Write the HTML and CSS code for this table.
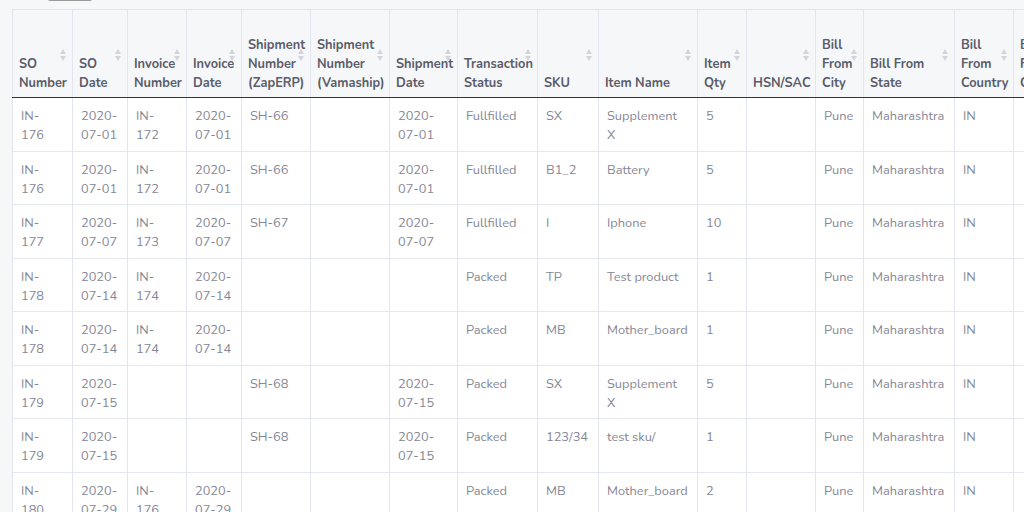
FILE: index.html
```html
<!DOCTYPE html>
<html lang="en">
<head>
<meta charset="utf-8">
<title>Sales Register</title>
<link rel="stylesheet" href="styles.css">
</head>
<body>
<div class="controls">
  <span class="length-select"></span>
</div>
<div class="table-scroll">
<table class="data-table">
  <thead>
    <tr>
      <th class="c-so sorting">SO Number</th>
      <th class="c-sodate sorting">SO Date</th>
      <th class="c-inv sorting">Invoice Number</th>
      <th class="c-invdate sorting">Invoice Date</th>
      <th class="c-shz sorting">Shipment Number (ZapERP)</th>
      <th class="c-shv sorting">Shipment Number (Vamaship)</th>
      <th class="c-shdate sorting">Shipment Date</th>
      <th class="c-status sorting">Transaction Status</th>
      <th class="c-sku sorting">SKU</th>
      <th class="c-item sorting">Item Name</th>
      <th class="c-qty sorting">Item Qty</th>
      <th class="c-hsn sorting">HSN/SAC</th>
      <th class="c-city sorting">Bill From City</th>
      <th class="c-state sorting">Bill From State</th>
      <th class="c-country sorting">Bill From Country</th>
      <th class="c-contact sorting">Bill From Contact</th>
      <th class="c-more sorting">Ship To Address</th>
    </tr>
  </thead>
  <tbody>
    <tr><td>IN-176</td><td>2020-07-01</td><td>IN-172</td><td>2020-07-01</td><td>SH-66</td><td></td><td>2020-07-01</td><td>Fullfilled</td><td>SX</td><td>Supplement X</td><td>5</td><td></td><td>Pune</td><td>Maharashtra</td><td>IN</td><td></td><td></td></tr>
    <tr><td>IN-176</td><td>2020-07-01</td><td>IN-172</td><td>2020-07-01</td><td>SH-66</td><td></td><td>2020-07-01</td><td>Fullfilled</td><td>B1_2</td><td>Battery</td><td>5</td><td></td><td>Pune</td><td>Maharashtra</td><td>IN</td><td></td><td></td></tr>
    <tr><td>IN-177</td><td>2020-07-07</td><td>IN-173</td><td>2020-07-07</td><td>SH-67</td><td></td><td>2020-07-07</td><td>Fullfilled</td><td>I</td><td>Iphone</td><td>10</td><td></td><td>Pune</td><td>Maharashtra</td><td>IN</td><td></td><td></td></tr>
    <tr><td>IN-178</td><td>2020-07-14</td><td>IN-174</td><td>2020-07-14</td><td></td><td></td><td></td><td>Packed</td><td>TP</td><td>Test product</td><td>1</td><td></td><td>Pune</td><td>Maharashtra</td><td>IN</td><td></td><td></td></tr>
    <tr><td>IN-178</td><td>2020-07-14</td><td>IN-174</td><td>2020-07-14</td><td></td><td></td><td></td><td>Packed</td><td>MB</td><td>Mother_board</td><td>1</td><td></td><td>Pune</td><td>Maharashtra</td><td>IN</td><td></td><td></td></tr>
    <tr><td>IN-179</td><td>2020-07-15</td><td></td><td></td><td>SH-68</td><td></td><td>2020-07-15</td><td>Packed</td><td>SX</td><td>Supplement X</td><td>5</td><td></td><td>Pune</td><td>Maharashtra</td><td>IN</td><td></td><td></td></tr>
    <tr><td>IN-179</td><td>2020-07-15</td><td></td><td></td><td>SH-68</td><td></td><td>2020-07-15</td><td>Packed</td><td>123/34</td><td>test sku/</td><td>1</td><td></td><td>Pune</td><td>Maharashtra</td><td>IN</td><td></td><td></td></tr>
    <tr><td>IN-180</td><td>2020-07-29</td><td>IN-176</td><td>2020-07-29</td><td></td><td></td><td></td><td>Packed</td><td>MB</td><td>Mother_board</td><td>2</td><td></td><td>Pune</td><td>Maharashtra</td><td>IN</td><td></td><td></td></tr>
  </tbody>
</table>
</div>
</body>
</html>
```

FILE: styles.css
```css
* { box-sizing: border-box; }

html, body {
  margin: 0;
  padding: 0;
  height: 100%;
  overflow: hidden;
}

body {
  background: #f6f7f9;
  font-family: "Nunito", "Lato", "Open Sans", sans-serif;
  font-size: 12.8px;
  color: #858796;
}

.controls {
  height: 9px;
  overflow: hidden;
  padding-left: 47px;
}

.length-select {
  display: block;
  width: 46px;
  height: 20px;
  margin-top: -19px;
  border: 1px solid #9a9a9a;
  border-radius: 3px;
  background: #fff;
}

.table-scroll {
  margin-left: 12px;
  overflow: hidden;
}

.data-table {
  border-collapse: collapse;
  table-layout: fixed;
  width: 1130px;
  background: #fff;
  border-left: 1px solid #e3e6f0;
}

.data-table th {
  position: relative;
  height: 88px;
  padding: 5px 12px 4px 6px;
  vertical-align: bottom;
  text-align: left;
  font-weight: 700;
  color: #5a5c69;
  line-height: 19px;
  background: #f6f7f9;
  border: 1px solid #e3e6f0;
  border-bottom: 1px solid #333;
}

.data-table td {
  padding: 9px 9px 5px 8px;
  vertical-align: top;
  line-height: 19.25px;
  border: 1px solid #e3e6f0;
  border-top: none;
}

/* narrow id columns break after the hyphen */
.data-table td:nth-child(1),
.data-table td:nth-child(3) {
  padding-right: 14px;
}

.data-table tbody tr:first-child td { border-top: 1px solid #333; }

/* sort indicators */
.sorting::before,
.sorting::after {
  content: "";
  position: absolute;
  right: 6px;
  width: 0;
  height: 0;
  border-left: 3px solid transparent;
  border-right: 3px solid transparent;
}
.sorting::before {
  top: 39px;
  border-bottom: 5px solid #d4d5da;
}
.sorting::after {
  top: 46px;
  border-top: 5px solid #d4d5da;
}

.c-so { width: 60px; }
.c-sodate { width: 55px; }
.c-inv { width: 59px; }
.c-invdate { width: 55px; }
.c-shz { width: 69px; }
.c-shv { width: 79px; }
.c-shdate { width: 68px; }
.c-status { width: 80px; }
.c-sku { width: 61px; }
.c-item { width: 99px; }
.c-qty { width: 49px; }
.c-hsn { width: 69px; }
.c-city { width: 48px; }
.c-state { width: 91px; }
.c-country { width: 59px; }
.c-contact { width: 60px; }
.c-more { width: 70px; }
```
